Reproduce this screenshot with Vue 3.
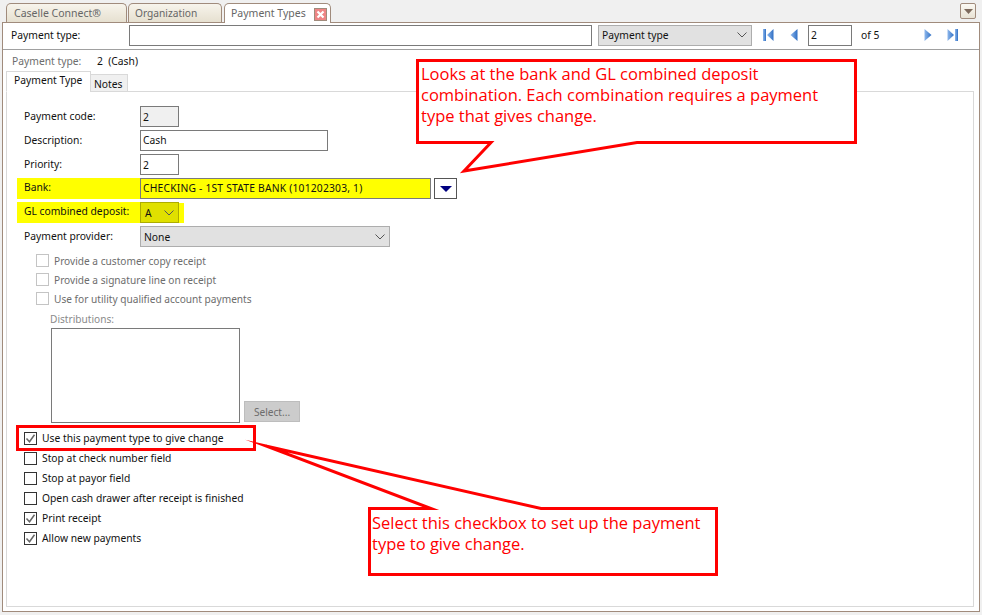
<script setup>
const fields = [
  { label: 'Payment code:', value: '2', cls: 'short readonly' },
  { label: 'Description:', value: 'Cash', cls: 'desc' },
  { label: 'Priority:', value: '2', cls: 'short' },
]
const disabledChecks = ['Provide a customer copy receipt', 'Provide a signature line on receipt', 'Use for utility qualified account payments']
const checks = [
  { label: 'Use this payment type to give change', on: true },
  { label: 'Stop at check number field', on: false },
  { label: 'Stop at payor field', on: false },
  { label: 'Open cash drawer after receipt is finished', on: false },
  { label: 'Print receipt', on: true },
  { label: 'Allow new payments', on: true },
]
</script>

<template>
  <div class="window">
    <div class="doc-tabs">
      <div class="doc-tab t1">Caselle Connect®</div>
      <div class="doc-tab t2">Organization</div>
      <div class="doc-tab t3 active">
        <span>Payment Types</span>
        <span class="close"><svg width="11" height="11" viewBox="0 0 11 11"><path d="M2.500 2.500l6 6M8.500 2.500l-6 6" stroke="#fff" stroke-width="2.200"/></svg></span>
      </div>
      <div class="menu-btn"><svg width="9" height="5" viewBox="0 0 9 5"><path d="M0 0h9L4.500 5z" fill="#7d6a5c"/></svg></div>
    </div>

    <div class="panel">
      <div class="toolbar">
        <span class="tb-label">Payment type:</span>
        <div class="field tb-input"></div>
        <div class="field tb-select">
          <span>Payment type</span>
          <svg class="chev" width="10" height="6" viewBox="0 0 10 6"><path d="M.5.5L5 5 9.500.5" fill="none" stroke="#555" stroke-width="1"/></svg>
        </div>
        <svg class="nav first" width="11" height="12" viewBox="0 0 11 12">
          <defs>
            <linearGradient id="navblue" x1="0" x2="1" y1="0" y2="0">
              <stop offset="0" stop-color="#8fb8ec"/>
              <stop offset="1" stop-color="#2f6fc4"/>
            </linearGradient>
          </defs>
          <rect width="3" height="12" fill="url(#navblue)"/><path d="M10.500 0v12L4 6z" fill="url(#navblue)"/>
        </svg>
        <svg class="nav prev" width="8" height="12" viewBox="0 0 8 12"><path d="M7.500 0v12L.5 6z" fill="url(#navblue)"/></svg>
        <div class="field page">2</div>
        <span class="of">of 5</span>
        <svg class="nav next" width="8" height="12" viewBox="0 0 8 12"><path d="M.5 0v12L7.500 6z" fill="url(#navblue)"/></svg>
        <svg class="nav last" width="11" height="12" viewBox="0 0 11 12"><path d="M.5 0v12L7 6z" fill="url(#navblue)"/><rect x="8" width="3" height="12" fill="url(#navblue)"/></svg>
      </div>

      <div class="summary">
        <span class="sum-label">Payment type:</span>
        <span>2&nbsp; (Cash)</span>
      </div>

      <div class="inner-tabs">
        <div class="inner-tab on">Payment Type</div>
        <div class="inner-tab">Notes</div>
      </div>

      <div class="tab-body">
        <div v-for="f in fields" :key="f.label" class="row">
          <span class="lbl">{{ f.label }}</span>
          <div class="field" :class="f.cls">{{ f.value }}</div>
        </div>

        <div class="row">
          <span class="lbl hl">Bank:</span>
          <div class="field bank">CHECKING - 1ST STATE BANK (101202303, 1)</div>
          <div class="bank-btn"><svg width="12" height="6" viewBox="0 0 12 6"><path d="M0 0h12L6 6z" fill="#000080"/></svg></div>
        </div>

        <div class="row">
          <span class="lbl hl">GL combined deposit:</span>
          <div class="field gl">
            <span>A</span>
            <svg class="chev" width="10" height="6" viewBox="0 0 10 6"><path d="M.5.5L5 5 9.500.5" fill="none" stroke="#555" stroke-width="1"/></svg>
          </div>
          <div class="gl-tail"></div>
        </div>

        <div class="row">
          <span class="lbl">Payment provider:</span>
          <div class="field provider">
            <span>None</span>
            <svg class="chev" width="10" height="6" viewBox="0 0 10 6"><path d="M.5.5L5 5 9.500.5" fill="none" stroke="#555" stroke-width="1"/></svg>
          </div>
        </div>

        <div class="disabled-group">
          <label v-for="c in disabledChecks" :key="c" class="d-check">
            <span class="box off"></span>{{ c }}
          </label>
          <div class="dist-label">Distributions:</div>
          <div class="dist-row">
            <div class="dist-list"></div>
            <div class="select-btn">Select...</div>
          </div>
        </div>

        <div class="checks">
          <label v-for="c in checks" :key="c.label" class="check">
            <span class="box">
              <svg v-if="c.on" width="11" height="11" viewBox="0 0 11 11"><path d="M1.500 5.500l3 3.200 5-7" fill="none" stroke="#666" stroke-width="1.500"/></svg>
            </span>{{ c.label }}
          </label>
        </div>
      </div>
    </div>

    <svg class="overlay" width="982" height="615" viewBox="0 0 982 615">
      <g fill="#fff" stroke="#f00" stroke-width="3" stroke-miterlimit="30">
        <path d="M417.500 60.500H855.500V142.500H637L464 171L491 142.500H417.500Z" />
        <path d="M369.500 508.500H431L266 446L541 508.500H716.500V574.500H369.500Z" />
        <rect x="17.500" y="426.500" width="237" height="23" fill="none" />
      </g>
    </svg>
    <div class="note note1">Looks at the bank and GL combined deposit combination. Each combination requires a payment type that gives change.</div>
    <div class="note note2">Select this checkbox to set up the payment type to give change.</div>
  </div>
</template>

<style>
html, body { margin: 0; background: #f0f0f0; }
</style>

<style scoped>
.window {
  position: relative;
  width: 982px;
  height: 615px;
  overflow: hidden;
  background: #f0f0f0;
  font-family: "Noto Sans", "Open Sans", sans-serif;
  font-size: 10.3px;
  color: #111;
  box-sizing: border-box;
  padding: 0 2px 3px;
  display: flex;
  flex-direction: column;
}
.doc-tabs {
  position: relative;
  height: 22px;
  display: flex;
  align-items: flex-end;
  padding-left: 4px;
  gap: 1px;
  flex: none;
}
.doc-tab {
  height: 19px;
  box-sizing: border-box;
  border: 1px solid #a08b7c;
  border-bottom: none;
  border-radius: 5px 5px 0 0;
  background: linear-gradient(#f7f4ec, #e6e0d0);
  color: #666;
  padding: 2px 0 0 7px;
  font-size: 10.5px;
}
.t1 { width: 121px; }
.t2 { width: 94px; margin-right: 1px; padding-left: 6px; font-size: 10.2px; }
.t3 {
  width: 107px;
  background: #fff;
  position: relative;
  z-index: 1;
  height: 20px;
  margin-bottom: -1px;
  padding-left: 6px;
  display: flex;
  justify-content: space-between;
  padding-right: 3px;
  align-items: flex-start;
}
.close {
  width: 11px;
  height: 11px;
  margin-top: 2px;
  background: #ee8585;
  border: 1px solid #a08b7c;
  display: flex;
}
.menu-btn {
  position: absolute;
  left: 958px;
  top: 3px;
  width: 16px;
  height: 16px;
  box-sizing: border-box;
  border: 1px solid #a08b7c;
  border-radius: 2px;
  background: linear-gradient(#fbf9f3, #e8e2d4);
  display: flex;
  align-items: center;
  justify-content: center;
}
.panel {
  flex: 1;
  min-height: 0;
  display: flex;
  flex-direction: column;
  background: #fff;
  border: 1px solid #a08b7c;
  width: 978px;
  box-sizing: border-box;
}
.toolbar {
  height: 27px;
  flex: none;
  box-sizing: border-box;
  border-bottom: 1px solid #a0a0a0;
  display: flex;
  align-items: center;
  padding: 0 0 2px 8px;
}
.tb-label { width: 118px; flex: none; }
.field {
  box-sizing: border-box;
  height: 21px;
  border: 1px solid #7a7a7a;
  background: #fff;
  display: flex;
  align-items: center;
  padding-left: 2px;
  flex: none;
  white-space: nowrap;
}
.tb-input { width: 463px; }
.tb-select {
  width: 154px;
  margin-left: 6px;
  background: #e1e1e1;
  border-color: #adadad;
  justify-content: space-between;
  padding: 0 4px 0 3px;
}
.nav { flex: none; }
.first { margin-left: 11px; }
.prev { margin-left: 16px; }
.page { width: 44px; margin-left: 10px; }
.of { margin-left: 9px; width: 63px; flex: none; }
.last { margin-left: 15px; }
.summary {
  height: 21px;
  flex: none;
  display: flex;
  align-items: center;
  padding-left: 9px;
}
.sum-label { width: 85px; color: #6d6d6d; }
.inner-tabs {
  height: 21px;
  flex: none;
  display: flex;
  align-items: flex-end;
  padding-left: 3px;
  position: relative;
  z-index: 1;
  margin-bottom: -1px;
}
.inner-tab {
  box-sizing: border-box;
  height: 18px;
  width: 38px;
  border: 1px solid #d9d9d9;
  background: #f0f0f0;
  padding: 2px 0 0 3px;
}
.inner-tab.on {
  width: 85px;
  height: 21px;
  background: #fff;
  border-bottom-color: #fff;
  padding: 1px 0 0 7px;
  margin-right: -1px;
}
.tab-body {
  flex: 1;
  margin: 0 5px 4px 3px;
  border: 1px solid #d9d9d9;
  padding: 14px 0 0 17px;
  min-height: 0;
}
.row {
  position: relative;
  height: 21px;
  margin-bottom: 3px;
  display: flex;
  align-items: center;
}
.lbl { width: 116px; flex: none; position: relative; padding-bottom: 1px; }
.short { width: 39px; }
.readonly { background: #f0f0f0; }
.desc { width: 188px; padding-bottom: 1px; }
.hl { background: #ff0; margin-left: -7px; padding-left: 7px; height: 20px; line-height: 19px; }
.bank { width: 291px; background: #ff0; letter-spacing: 0.2px; padding-bottom: 1px; }
.bank-btn {
  box-sizing: border-box;
  width: 23px;
  height: 21px;
  margin-left: 3px;
  border: 1px solid #555;
  background: #fff;
  display: flex;
  align-items: center;
  justify-content: center;
}
.gl {
  width: 39px;
  background: #e0e000;
  border-color: #adad00;
  justify-content: space-between;
  padding: 0 4px;
}
.gl-tail { width: 5px; height: 20px; background: #ff0; }
.provider {
  width: 250px;
  background: #e1e1e1;
  border-color: #adadad;
  justify-content: space-between;
  padding: 0 4px 0 3px;
}
.disabled-group { padding: 1px 0 0 12px; color: #6d6d6d; font-size: 10.15px; }
.d-check, .check {
  display: flex;
  align-items: center;
  white-space: nowrap;
}
.d-check { height: 19px; }
.box {
  box-sizing: border-box;
  width: 13px;
  height: 13px;
  border: 1px solid #333;
  background: #fff;
  margin-right: 5px;
  display: flex;
  flex: none;
}
.box.off { border-color: #c4c4c4; }
.dist-label { margin: 4px 0 0 14px; height: 16px; color: #8a8a8a; }
.dist-row {
  display: flex;
  align-items: flex-end;
  padding-left: 15px;
}
.dist-list {
  box-sizing: border-box;
  width: 189px;
  height: 95px;
  border: 1px solid #7a7a7a;
  background: #fff;
}
.select-btn {
  box-sizing: border-box;
  width: 56px;
  height: 21px;
  margin: 0 0 1px 4px;
  background: #ccc;
  border: 1px solid #bdbdbd;
  color: #6d6d6d;
  display: flex;
  align-items: center;
  justify-content: center;
}
.checks { padding-top: 5px; }
.check { height: 20px; }
.overlay { position: absolute; left: 0; top: 0; pointer-events: none; z-index: 2; }
.note {
  position: absolute;
  z-index: 3;
  color: #f00;
  font-family: "Open Sans", "Noto Sans", sans-serif;
  font-size: 16.5px;
  line-height: 21px;
}
.note1 { left: 421px; top: 63px; width: 415px; }
.note2 { left: 372px; top: 512px; width: 340px; }
</style>
